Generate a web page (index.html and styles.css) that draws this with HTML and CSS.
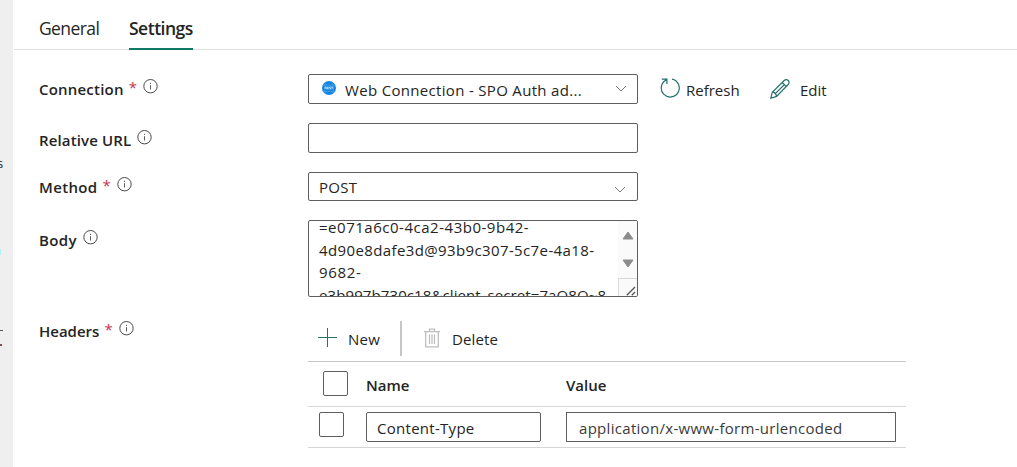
FILE: index.html
```html
<!DOCTYPE html>
<html lang="en">
<head>
<meta charset="utf-8">
<title>Web activity settings</title>
<link rel="stylesheet" href="styles.css">
</head>
<body>
<svg class="defs" width="0" height="0">
  <symbol id="info" viewBox="0 0 15 15"><circle cx="7.5" cy="7.2" r="6.7" fill="none" stroke="#4b4a49"/><path d="M7.5 6.2v4.3" stroke="#5f5e5c"/><path d="M7.5 3.8v1.2" stroke="#5f5e5c"/></symbol>
  <symbol id="chevron" viewBox="0 0 12 7"><path d="M1 1l5 5 5-5" fill="none" stroke="#777" stroke-width="1"/></symbol>
</svg>
<div class="page">
  <aside class="rail">
    <span class="rail-text">s</span>
    <span class="rail-cyan"></span>
    <span class="rail-line"></span>
    <span class="rail-dot"></span>
  </aside>
  <main class="panel">
    <nav class="tabs">
      <a class="tab tab-general">General</a>
      <a class="tab tab-active">Settings</a>
    </nav>
    <form class="form">
      <div class="row">
        <label class="label"><span class="name connection">Connection</span><span class="req">*</span><svg class="info"><use href="#info"/></svg></label>
        <div class="field select">
          <svg class="rest" viewBox="0 0 14 14"><circle cx="7" cy="7" r="7" fill="#1583de"/><path d="M1 4h12M1 10.5h12M4 1.5c-2 3-2 8 0 11M10 1.5c2 3 2 8 0 11" fill="none" stroke="#46a5ed" stroke-width=".7"/><path d="M3.2 8.2V6h1v1l.4 1.2M6.8 6H5.4v2h1.4M5.4 7h1.2M8.8 6H7.5v1h1.2v1H7.4M9.2 6h1.8M10.1 6v2.2" fill="none" stroke="#d5ecff" stroke-width=".7"/></svg>
          <span class="value web">Web Connection - SPO Auth ad...</span>
          <svg class="chevron high"><use href="#chevron"/></svg>
        </div>
        <div class="actions">
          <svg class="refresh" viewBox="0 0 20 20"><path d="M12 1.2A9 9 0 1 1 6.4 1.9M1.8 1.1h5.1v4.8" fill="none" stroke="#23706c" stroke-width="1.2"/></svg>
          <span class="refresh-text">Refresh</span>
          <svg class="edit" viewBox="0 0 20 20"><path d="M.8 19.2l1.5-6L14.2 1.5a2.8 2.8 0 0 1 4 0 2.8 2.8 0 0 1 0 4L6.6 17.4zM2.3 13.2c2 .1 3.8 1.8 4.3 4.2M12.2 3.4l4.2 4.2M14 6L4.8 15.2" fill="none" stroke="#23706c" stroke-width="1.2"/></svg>
          <span class="edit-text">Edit</span>
        </div>
      </div>
      <div class="row url-row">
        <label class="label"><span class="name relative-url">Relative URL</span><svg class="info"><use href="#info"/></svg></label>
        <div class="field"></div>
      </div>
      <div class="row method">
        <label class="label"><span class="name method-name">Method</span><span class="req">*</span><svg class="info"><use href="#info"/></svg></label>
        <div class="field select"><span class="value post">POST</span><svg class="chevron low"><use href="#chevron"/></svg></div>
      </div>
      <div class="row body-row">
        <label class="label"><span class="name body-name">Body</span><svg class="info"><use href="#info"/></svg></label>
        <div class="field textarea">
          <div class="body-text"><div><span class="b1">=e071a6c0-4ca2-43b0-9b42-</span></div><div><span class="b2">4d90e8dafe3d@93b9c307-5c7e-4a18-</span></div><div><span class="b3">9682-</span></div><div><span class="b4">e3b997b730c18&amp;client_secret=7aQ8Q~8</span></div></div>
          <div class="scrollbar">
            <svg class="arrow" viewBox="0 0 12 9"><path d="M6 1l5 7H1z" fill="#8b8b8b" stroke="#8b8b8b" stroke-linejoin="round"/></svg>
            <svg class="arrow" viewBox="0 0 12 9"><path d="M6 8L1 1h10z" fill="#8b8b8b" stroke="#8b8b8b" stroke-linejoin="round"/></svg>
            <div class="corner"><svg class="grip" viewBox="0 0 10 10"><path d="M.8 9.2l8.2-8.2M5.8 9.2l3.2-3.2" stroke="#555" stroke-width="1.3"/></svg></div>
          </div>
        </div>
      </div>
      <div class="row headers-row">
        <label class="label"><span class="name headers-name">Headers</span><span class="req">*</span><svg class="info"><use href="#info"/></svg></label>
        <div class="headers">
          <div class="toolbar">
            <svg class="plus" viewBox="0 0 19 19"><path d="M9.5 0v19M0 9.5h19" stroke="#23706c"/></svg>
            <span class="new-text">New</span>
            <span class="divider"></span>
            <svg class="trash" viewBox="0 0 16 20"><path d="M0 3.5h16M5.5 3V1h5v2M1.7 4v14.8h12.6V4M5.5 6.5v9.5M8 6.5v9.5M10.5 6.5v9.5" fill="none" stroke="#bdbdbd" stroke-width="1.25"/></svg>
            <span class="delete-text">Delete</span>
          </div>
          <div class="table-head">
            <span class="check"></span>
            <span class="th-name">Name</span>
            <span class="th-value">Value</span>
          </div>
          <div class="table-row">
            <span class="check"></span>
            <div class="cell cell-name"><span class="content-type">Content-Type</span></div>
            <div class="cell cell-value"><span class="application">application/x-www-form-urlencoded</span></div>
          </div>
        </div>
      </div>
    </form>
  </main>
</div>
</body>
</html>
```
FILE: styles.css
```css
* { box-sizing: border-box; }
body {
  margin: 0;
  background: #fff;
  color: #252423;
  font: 15px/20px "Open Sans", "Noto Sans", sans-serif;
  white-space: nowrap;
  overflow: hidden;
}
svg { display: block; flex: none; }
.defs { position: absolute; }
.page { display: flex; height: 467px; }

.rail { width: 13px; flex: none; background: #efefef; display: flex; flex-direction: column; overflow: hidden; }
.rail-text { margin: 153px 0 0 -3px; font-size: 13px; }
.rail-cyan { width: 1px; height: 6px; margin-top: 76px; background: #b3f2f5; }
.rail-line { width: 3px; height: 1px; margin-top: 75px; background: #555; }
.rail-dot { width: 2px; height: 2px; margin-top: 13px; background: #805050; }

.panel { flex: 1; }
.tabs { display: flex; gap: 31px; height: 50px; margin-left: 1px; padding-left: 25px; border-bottom: 1px solid #e1dfdd; }
.tab { height: 50px; padding-top: 16px; font-size: 17.5px; line-height: 25px; }
.tab-general { width: 59px; letter-spacing: -0.6px; }
.tab-active { width: 64px; font-weight: 600; letter-spacing: -0.5px; border-bottom: 2px solid #117865; }

.form { display: flex; flex-direction: column; gap: 19px; padding: 24px 0 0 26px; }
.row { display: flex; height: 30px; }
.label { width: 269px; display: flex; padding-top: 5px; }
.name { font-weight: 600; }
.connection { letter-spacing: 0.2px; }
.relative-url { letter-spacing: 0.13px; }
.method-name { letter-spacing: 0.35px; }
.body-name { letter-spacing: 0.35px; }
.req { margin: -2px 0 0 5px; color: #c4314b; }
.info { width: 15px; height: 15px; margin: 0 0 0 6px; }
.field { width: 330px; border: 1px solid #605e5c; border-radius: 2px; display: flex; }
.select { padding-left: 10px; }
.rest { width: 14px; height: 14px; margin: 6px 9px 0 3px; }
.value { flex: 1; padding-top: 5px; }
.web { letter-spacing: 0.32px; }
.post { padding-top: 4px; letter-spacing: 0.3px; }
.chevron { width: 12px; height: 7px; }
.high { margin: 10px 10px 0 0; }
.low { margin: 13px 11px 0 0; }
.actions { display: flex; padding: 6px 0 0 22px; }
.refresh { width: 20px; height: 20px; margin-top: -2px; }
.refresh-text { width: 53px; margin-left: 6px; }
.edit { width: 20px; height: 20px; margin: -1px 0 0 31px; }
.edit-text { margin-left: 10px; }
.url-row .label { padding-top: 7px; }
.method { height: 29px; }
.body-row { height: 77px; }
.body-row .label { padding-top: 10px; }
.textarea { overflow: hidden; padding-left: 10px; }
.body-text { flex: 1; min-width: 0; margin-top: -5px; line-height: 22.5px; }
.b1 { letter-spacing: 0.52px; }
.b2 { letter-spacing: 0.38px; }
.b3 { letter-spacing: 0.7px; }
.b4 { letter-spacing: 0.1px; }
.scrollbar { width: 19px; background: #fafafa; display: flex; flex-direction: column; align-items: center; padding-top: 10px; gap: 19px; }
.arrow { width: 12px; height: 9px; }
.corner { width: 19px; height: 19px; border: solid #d8d8d8; border-width: 1px 0 0 1px; margin-top: -9px; padding: 7px 0 0 7px; flex: none; }
.grip { width: 10px; height: 10px; }

.headers-row { height: 128px; margin-top: 4px; }
.headers-row .label { padding-top: 1px; }
.headers { width: 598px; }
.toolbar { display: flex; height: 41px; padding-left: 10px; }
.plus { width: 19px; height: 19px; margin-top: 8px; }
.new-text { width: 33px; margin: 9px 0 0 11px; letter-spacing: 0.3px; }
.divider { width: 2px; height: 35px; margin: 1px 0 0 19px; background: #c8c6c4; }
.trash { width: 16px; height: 20px; margin: 8px 0 0 22px; }
.delete-text { margin: 9px 0 0 12px; letter-spacing: 0.15px; }
.table-head { display: flex; height: 45px; padding: 9px 0 0 15px; border-top: 1px solid #c8c6c4; font-weight: 600; }
.check { width: 25px; height: 25px; flex: none; border: 1px solid #605e5c; border-radius: 2px; }
.th-name { width: 200px; margin: 4px 0 0 18px; }
.th-value { margin-top: 4px; }
.table-row { display: flex; height: 42px; padding: 5px 0 0 11px; border: solid #d8d6d4; border-width: 1px 0; }
.cell { height: 30px; border: 1px solid #605e5c; padding-top: 5px; }
.cell-name { width: 175px; margin-left: 22px; padding-left: 10px; border-radius: 2px; }
.cell-value { width: 330px; margin-left: 25px; padding-left: 12px; color: #3b3a39; }
.content-type { letter-spacing: 0.28px; }
.application { letter-spacing: 0.3px; }
```
